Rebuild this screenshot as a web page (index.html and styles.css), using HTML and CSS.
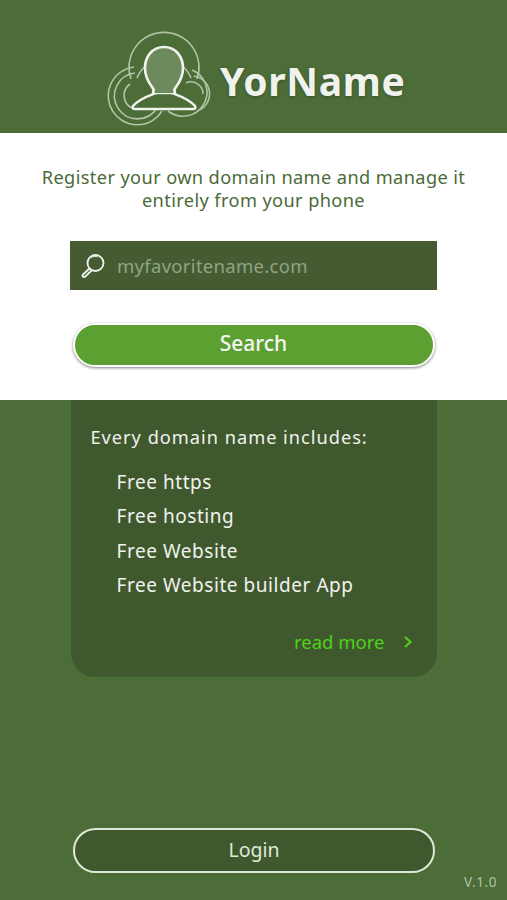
FILE: index.html
```html
<!DOCTYPE html>
<html lang="en">
<head>
    <meta charset="UTF-8">
    <meta name="viewport" content="width=device-width, initial-scale=1.0">
    <title>YorName</title>
    <link rel="stylesheet" href="styles.css">
</head>
<body>

<div class="app">
    <header class="brand">
        <svg class="brand__logo" width="114" height="96" viewBox="0 0 114 96" fill="none">
            <g stroke="#b2c3a6" stroke-width="1.6">
                <path d="M25 48A35 35 0 1 1 91 48"/>
                <path d="M31 47A29 29 0 0 1 85 47"/>
                <path d="M28 36A29 29 0 1 0 56 80"/>
                <path d="M29 42A23 23 0 1 0 51 77"/>
                <path d="M24 53A14 14 0 0 0 26 77"/>
                <path d="M86 39A24 24 0 1 1 62 80"/>
                <path d="M88 45A18 18 0 0 1 91 80"/>
                <path d="M80 52A12 12 0 0 1 97 63"/>
            </g>
            <path d="M27 75C33 68 42 65 50 62H66C74 65 83 68 89 75C90 77 89 78 87 78H29C27 78 26 77 27 75Z" fill="#4c6c38" stroke="#f1f4ee" stroke-width="2.6" stroke-linejoin="round"/>
            <path d="M58 16C46 16 39 26 39 37C39 46 43 52 46 56C48 58 48 60 47 62H69C68 60 68 58 70 56C73 52 77 46 77 37C77 26 70 16 58 16Z" fill="#6c8a5c"/>
            <path d="M47 62C48 60 48 58 46 56C43 52 39 46 39 37C39 26 46 16 58 16C70 16 77 26 77 37C77 46 73 52 70 56C68 58 68 60 69 62" stroke="#f1f4ee" stroke-width="2.6" stroke-linecap="round"/>
        </svg>
        <span class="brand__name">YorName</span>
    </header>

    <section class="search">
        <p class="search__intro">Register your own domain name and manage it entirely from your phone</p>
        <div class="search__field">
            <svg class="search__icon" width="26" height="26" viewBox="0 0 26 26" fill="none" stroke="#f1f4ee">
                <circle cx="15.5" cy="10" r="8" stroke-width="1.8"/>
                <path d="M11 4.5C13 3.3 16 3.3 17.500 4" stroke-width="1"/>
                <path d="M9.500 15.500L3 21.500C2 22.500 2.500 24 4 24C4.500 24 5 23.800 5.500 23.300L11.500 17.500" stroke-width="1.8" stroke-linejoin="round"/>
            </svg>
            <span class="search__placeholder">myfavoritename.com</span>
        </div>
        <button class="search__button">Search</button>
    </section>

    <section class="perks">
        <h2 class="perks__title">Every domain name includes:</h2>
        <ul class="perks__list">
            <li>Free https</li>
            <li>Free hosting</li>
            <li>Free Website</li>
            <li>Free Website builder App</li>
        </ul>
        <a class="perks__more">
            read more
            <svg width="10" height="14" viewBox="0 0 10 14" fill="none" stroke="#4fd11c" stroke-width="2.200">
                <path d="M2 2L7.500 7L2 12"/>
            </svg>
        </a>
    </section>

    <footer class="footer">
        <button class="footer__login">Login</button>
        <span class="footer__version">V.1.0</span>
    </footer>
</div>

</body>
</html>
```

FILE: styles.css
```css
* {
    box-sizing: border-box;
}
body {
    margin: 0;
    font-family: "Noto Sans", "Open Sans", sans-serif;
}
.app {
    display: flex;
    flex-direction: column;
    height: 900px;
    overflow: hidden;
    background: #4c6c38;
}
.brand {
    display: flex;
    align-items: flex-start;
    height: 133px;
    padding: 31px 0 0 106px;
}
.brand__logo {
    flex: none;
}
.brand__name {
    margin-top: 25px;
    font-size: 39px;
    font-weight: 700;
    line-height: 50px;
    letter-spacing: 0.7px;
    color: #f0f3ed;
    text-shadow: 0 1px 3px rgba(0, 0, 0, 0.25);
}
.search {
    display: flex;
    flex-direction: column;
    align-items: center;
    height: 267px;
    padding-top: 33px;
    background: #fff;
}
.search__intro {
    margin: 0;
    width: 440px;
    font-size: 18.2px;
    line-height: 23px;
    text-align: center;
    letter-spacing: 0.39px;
    color: #4b6a38;
}
.search__field {
    display: flex;
    align-items: center;
    gap: 11px;
    width: 367px;
    height: 49px;
    margin-top: 29px;
    padding-left: 10px;
    background: #465b32;
}
.search__placeholder {
    font-size: 18.5px;
    letter-spacing: 0.3px;
    color: #8fa585;
}
.search__button {
    width: 362px;
    height: 44px;
    margin-top: 33px;
    padding-bottom: 5px;
    border: 2px solid #fff;
    border-radius: 22px;
    background: #5ba030;
    box-shadow: 0 1px 3px rgba(0, 0, 0, 0.5);
    font-family: inherit;
    font-size: 21px;
    font-weight: 500;
    color: #f4f7f1;
}
.perks {
    width: 366px;
    height: 277px;
    margin: 0 auto;
    padding: 24px 24px 0 20px;
    border-radius: 0 0 24px 24px;
    background: #40582e;
    color: #f0f3ed;
}
.perks__title {
    margin: 0;
    font-size: 18.2px;
    font-weight: 400;
    line-height: 26px;
    letter-spacing: 1px;
}
.perks__list {
    margin: 15px 0 0;
    padding: 0 0 0 26px;
    list-style: none;
    font-size: 19px;
    line-height: 34.300px;
    letter-spacing: 0.55px;
}
.perks__more {
    display: flex;
    justify-content: flex-end;
    align-items: center;
    gap: 18px;
    margin-top: 27px;
    font-size: 18.5px;
    line-height: 26px;
    color: #4fd11c;
}
.footer {
    display: flex;
    flex-direction: column;
    margin-top: auto;
    padding: 0 10px 9px 73px;
}
.footer__login {
    width: 362px;
    height: 45px;
    padding-bottom: 4px;
    border: 2px solid #dfe8d6;
    border-radius: 23px;
    background: #40582e;
    font-family: inherit;
    font-size: 19.500px;
    color: #dfe8d6;
}
.footer__version {
    align-self: flex-end;
    margin-top: 1px;
    font-size: 13.500px;
    line-height: 17px;
    letter-spacing: 0.6px;
    color: #b3c2a8;
}
```
